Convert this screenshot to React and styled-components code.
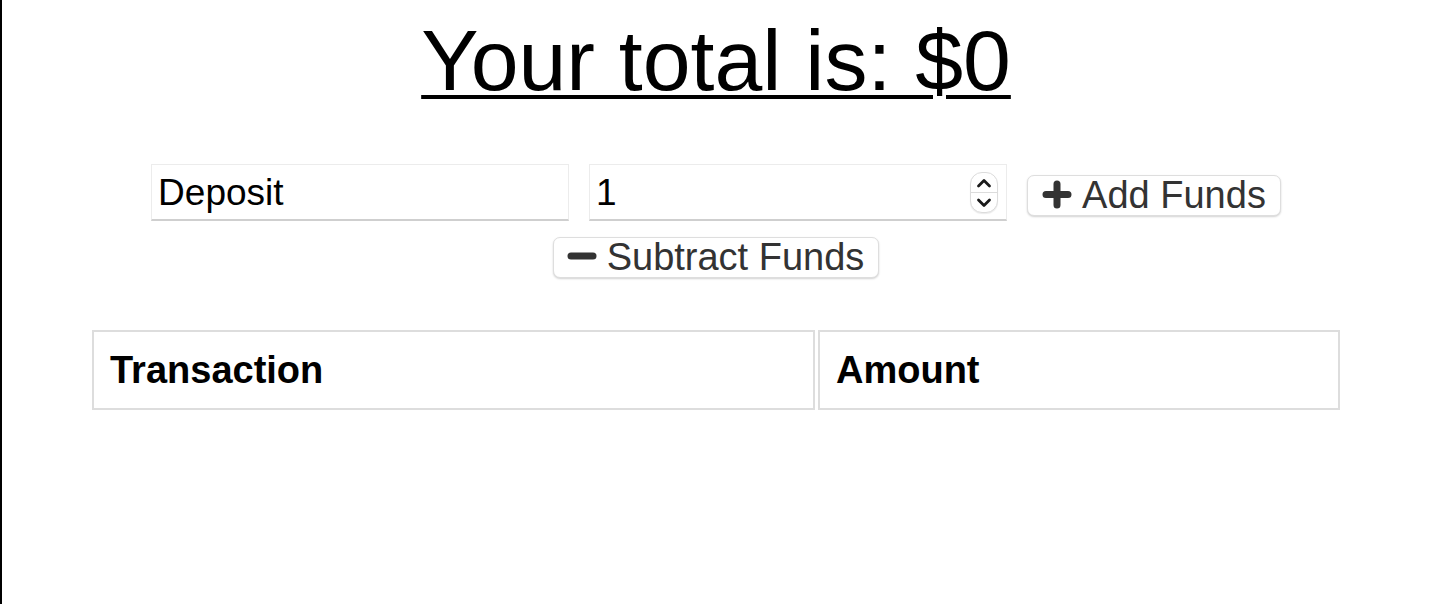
import React, { useState } from "react";
import styled, { createGlobalStyle } from "styled-components";

const GlobalStyle = createGlobalStyle`
  html, body { margin: 0; padding: 0; background: #fff; }
  body { font-family: "Liberation Sans", Arial, sans-serif; }
  * { box-sizing: border-box; }
`;

const Page = styled.div`
  min-height: 604px;
  border-left: 2px solid #000;
  padding-top: 11px;
  display: flex;
  flex-direction: column;
  align-items: center;
`;

const Title = styled.h1`
  margin: 0;
  font-size: 86px;
  font-weight: 400;
  line-height: 98px;
  color: #000;
  text-decoration: underline;
  text-decoration-thickness: 4px;
  text-underline-offset: 5px;
`;

const Form = styled.form`
  margin-top: 55px;
  width: 1140px;
  display: flex;
  flex-wrap: wrap;
  justify-content: center;
  align-items: flex-start;
  column-gap: 20px;
  row-gap: 16px;
`;

const Field = styled.div`
  position: relative;
  display: inline-block;
`;

const TextInput = styled.input`
  display: block;
  width: 418px;
  height: 57px;
  padding: 2px 6px 0;
  border: 1px solid #ececec;
  border-bottom: 2px solid #cfcfcf;
  border-radius: 0;
  font-family: "Liberation Sans", Arial, sans-serif;
  font-size: 37px;
  color: #000;
  background: #fff;
  outline: none;
  -moz-appearance: textfield;
  &::-webkit-inner-spin-button,
  &::-webkit-outer-spin-button {
    -webkit-appearance: none;
    margin: 0;
  }
`;

const Spinner = styled.div`
  position: absolute;
  right: 9px;
  top: 8px;
  width: 28px;
  height: 41px;
  border: 1px solid #dcdcdc;
  border-radius: 12px;
  background: #fff;
  display: flex;
  flex-direction: column;
  box-shadow: 0 1px 1px rgba(0, 0, 0, 0.08);
`;

const SpinHalf = styled.div`
  flex: 1;
  display: flex;
  align-items: center;
  justify-content: center;
  border-top: ${(p) => (p.$lower ? "1px solid #dcdcdc" : "none")};
`;

const Button = styled.button`
  margin-top: ${(p) => p.$mt || 0}px;
  height: 41px;
  padding: 0 ${(p) => p.$pr}px 0 ${(p) => p.$pl}px;
  border: 1px solid #dedede;
  border-radius: 7px;
  background: #fff;
  box-shadow: 0 1px 2px rgba(0, 0, 0, 0.18);
  font-family: "Liberation Sans", Arial, sans-serif;
  font-size: 38px;
  line-height: 39px;
  color: #333;
  white-space: nowrap;
  cursor: pointer;
`;

const Icon = styled.svg`
  display: inline-block;
  margin-right: 10px;
  vertical-align: ${(p) => p.$va};
`;

const Table = styled.table`
  margin-top: 49px;
  border-collapse: separate;
  border-spacing: 3px;
  table-layout: fixed;
  width: 1254px;
`;

const HeadCell = styled.th`
  box-sizing: border-box;
  width: ${(p) => p.$w}px;
  border: 2px solid #dddddd;
  padding: 16px 16px;
  text-align: left;
  font-family: "Liberation Sans", Arial, sans-serif;
  font-size: 38px;
  line-height: 44px;
  font-weight: 700;
  color: #000;
`;

const Chevron = ({ up }) => (
  <svg width="16" height="10" viewBox="0 0 16 10">
    <path
      d={up ? "M2.5 8 L8 2.5 L13.5 8" : "M2.5 2 L8 7.5 L13.5 2"}
      fill="none"
      stroke="#1a1a1a"
      strokeWidth="2.8"
      strokeLinecap="round"
      strokeLinejoin="round"
    />
  </svg>
);

export default function App() {
  const [label, setLabel] = useState("Deposit");
  const [amount, setAmount] = useState("1");
  return (
    <>
      <GlobalStyle />
      <Page>
        <Title>Your total is: $0</Title>
        <Form onSubmit={(e) => e.preventDefault()}>
          <Field>
            <TextInput
              type="text"
              value={label}
              onChange={(e) => setLabel(e.target.value)}
            />
          </Field>
          <Field>
            <TextInput
              type="number"
              value={amount}
              onChange={(e) => setAmount(e.target.value)}
            />
            <Spinner>
              <SpinHalf>
                <Chevron up />
              </SpinHalf>
              <SpinHalf $lower>
                <Chevron />
              </SpinHalf>
            </Spinner>
          </Field>
          <Button type="button" $mt={11} $pl={14} $pr={14}>
            <Icon width="30" height="29" viewBox="0 0 30 29" $va="-1px">
              <path
                d="M15 4 V25 M4 14.5 H26"
                stroke="#333"
                strokeWidth="7"
                strokeLinecap="round"
                fill="none"
              />
            </Icon>
            Add Funds
          </Button>
          <Button type="button" $pl={13} $pr={14}>
            <Icon width="30" height="8" viewBox="0 0 30 8" $va="10px">
              <path
                d="M4 4 H26"
                stroke="#333"
                strokeWidth="7"
                strokeLinecap="round"
                fill="none"
              />
            </Icon>
            Subtract Funds
          </Button>
        </Form>
        <Table>
          <thead>
            <tr>
              <HeadCell $w={723}>Transaction</HeadCell>
              <HeadCell $w={522}>Amount</HeadCell>
            </tr>
          </thead>
        </Table>
      </Page>
    </>
  );
}
